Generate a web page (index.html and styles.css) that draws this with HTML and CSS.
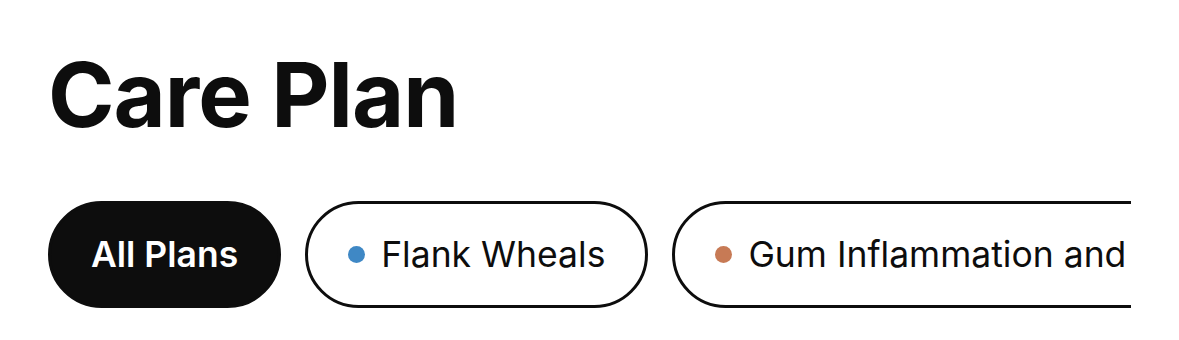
FILE: index.html
```html
<!DOCTYPE html>
<html lang="en">
<head>
    <meta charset="UTF-8">
    <meta name="viewport" content="width=device-width, initial-scale=1.0">
    <title>Care Plan</title>
    <link rel="stylesheet" href="styles.css">
</head>
<body>
    <div class="page">
        <h1 class="title">Care Plan</h1>
        <div class="filters">
            <button class="chip chip-active">All Plans</button>
            <button class="chip"><span class="dot dot-blue"></span>Flank Wheals</button>
            <button class="chip"><span class="dot dot-orange"></span>Gum Inflammation and Bleeding</button>
        </div>
    </div>
</body>
</html>
```

FILE: styles.css
```css
/* Halaman utama */
body {
    margin: 0;
    background: #fff;
    font-family: 'Inter', 'Noto Sans', sans-serif;
    color: #0d0d0d;
}

.page {
    padding: 40px 48px 0 48px;
    width: 1083px;
}

/* Judul */
.title {
    margin: 0;
    font-size: 90px;
    font-weight: 700;
    letter-spacing: -1px;
    line-height: 110px;
}

/* Daftar filter */
.filters {
    display: flex;
    gap: 24px;
    margin-top: 51px;
    overflow: hidden;
}

.chip {
    flex-shrink: 0;
    display: flex;
    align-items: center;
    gap: 16px;
    height: 107px;
    padding: 0 40px;
    border: 3px solid #0d0d0d;
    border-radius: 54px;
    background: #fff;
    color: #0d0d0d;
    font-family: inherit;
    font-size: 35.5px;
    font-weight: 400;
    white-space: nowrap;
}

.chip-active {
    background: #0d0d0d;
    color: #fff;
    font-weight: 600;
}

.dot {
    width: 17px;
    height: 17px;
    border-radius: 50%;
}

.dot-blue {
    background: #3f88c5;
}

.dot-orange {
    background: #c77a55;
}
```
